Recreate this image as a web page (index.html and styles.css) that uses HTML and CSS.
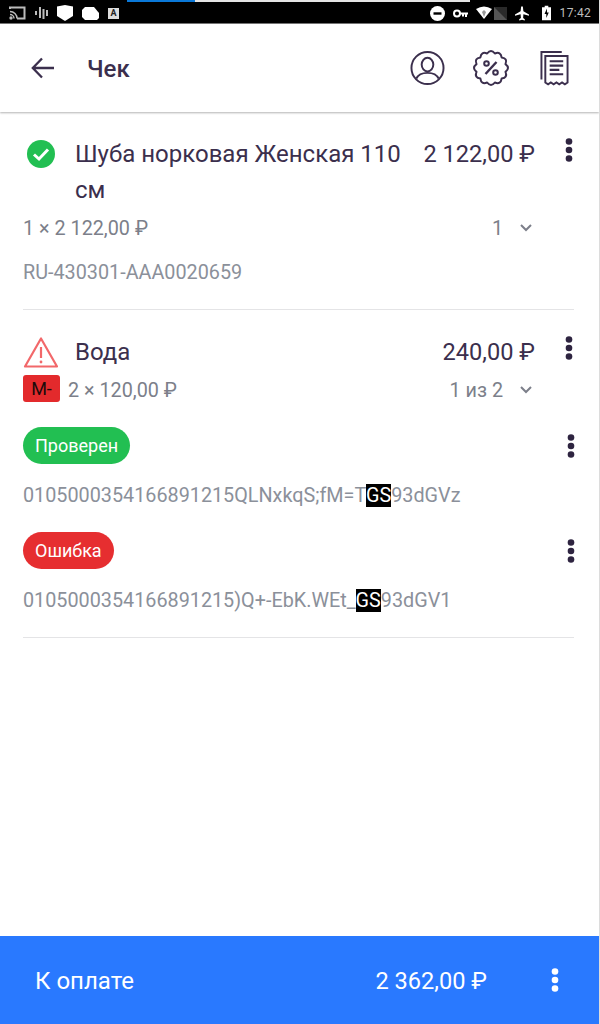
FILE: index.html
```html
<!DOCTYPE html>
<html lang="ru">
<head>
<meta charset="utf-8">
<title>Чек</title>
<link rel="stylesheet" href="styles.css">
</head>
<body>
<div class="screen">
  <div class="status">
    <div class="progress"><span class="progress-blue"></span><span class="progress-light"></span></div>
    <div class="status-left">
      <svg class="sicon" width="17" height="14" viewBox="0 0 17 14"><path d="M1 3V1.500h14.500v11H8" fill="none" stroke="#bbb" stroke-width="2"/><path d="M1 5.500a7 7 0 0 1 7 7M1 8.500a4 4 0 0 1 4 4" fill="none" stroke="#bbb" stroke-width="1.500"/><circle cx="2" cy="12" r="1.700" fill="#bbb"/></svg>
      <svg class="sicon" width="13" height="12" viewBox="0 0 13 12"><path d="M1 4v4M5 0v11M8.500 2v10M12 3v6" stroke="#bbb" stroke-width="2"/></svg>
      <svg class="sicon" width="16" height="16" viewBox="0 0 16 16"><path d="M0 1.500 8 0l8 1.500V11l-8 5-8-5Z" fill="#fff"/></svg>
      <svg class="sicon" width="17" height="13" viewBox="0 0 17 13"><path d="M3 0h9l5 6v5l-2 2H3L0 10V3Z" fill="#fff"/></svg>
      <span class="a-box">A</span>
    </div>
    <div class="status-right">
      <svg width="15" height="15" viewBox="0 0 15 15"><circle cx="7.500" cy="7.500" r="7.500" fill="#fff"/><rect x="3.500" y="6.300" width="8" height="2.400" fill="#000"/></svg>
      <svg width="15" height="9" viewBox="0 0 15 9"><circle cx="4" cy="4.500" r="3" fill="none" stroke="#fff" stroke-width="2"/><path d="M7 3.500h8v2h-1v2.500h-2V5.500h-1v2H9v-2H7Z" fill="#fff"/></svg>
      <svg width="31" height="14" viewBox="0 0 31 14"><path d="M0 3Q8-2 16 3L8 13Z" fill="#fff"/><path d="M8 4l2 2-2 5-2-5Z" fill="#999"/><path d="M18 1h13v13H18Z" fill="#2a2a2a"/><path d="M18 1l13 13H18Z" fill="#555"/></svg>
      <svg width="14" height="15" viewBox="0 0 15 15"><path d="M6.600 0h1.800l.6 5.200 6 3.300v1.500L9 8.300l-.3 4 1.800 1.300V15l-3-.8-3 .8v-1.400l1.800-1.300L6 8.300 0 10V8.500l6-3.300Z" fill="#fff"/></svg>
      <svg class="battery" width="9" height="16" viewBox="0 0 10 16"><path d="M3 0h4v1.500h3V16H0V1.500h3Z" fill="#fff"/><path d="M5.500 3 2.800 9h2v4.500L7.500 7.500h-2Z" fill="#000"/></svg>
      <span class="clock">17:42</span>
    </div>
  </div>

  <header class="appbar">
    <svg class="back" width="24" height="24" viewBox="0 0 24 24"><path d="M23 12H2M11 2.500 1.800 12l9.200 9.500" fill="none" stroke="#3b2f4d" stroke-width="2.300"/></svg>
    <h1 class="title">Чек</h1>
    <div class="actions">
      <svg width="35" height="36" viewBox="0 0 36 36"><g fill="none" stroke="#3b2f4d" stroke-width="2"><circle cx="18" cy="18" r="16.500"/><ellipse cx="18" cy="14.500" rx="6" ry="7"/><path d="M6.500 29c2-4.500 6-6 11.500-6s9.500 1.500 11.500 6"/></g></svg>
      <svg class="badge" width="36" height="36" viewBox="0 0 36 36"><path d="M21.880 3.510Q27.750 1.110 28.610 7.390 34.890 8.250 32.490 14.120 37.500 18 32.490 21.880 34.890 27.750 28.610 28.610 27.750 34.890 21.880 32.490 18 37.500 14.120 32.490 8.250 34.890 7.390 28.610 1.110 27.750 3.510 21.880-1.500 18 3.510 14.120 1.110 8.250 7.390 7.390 8.250 1.110 14.120 3.510 18-1.500 21.880 3.510Z" fill="none" stroke="#3b2f4d" stroke-width="2" stroke-linejoin="round"/><path d="M12.500 24 23.500 12" stroke="#3b2f4d" stroke-width="2.400"/><circle cx="13.500" cy="13.500" r="2.300" fill="none" stroke="#3b2f4d" stroke-width="2"/><circle cx="22.500" cy="22.500" r="2.300" fill="none" stroke="#3b2f4d" stroke-width="2"/></svg>
      <svg width="29" height="36" viewBox="0 0 30 36"><g fill="none" stroke="#3b2f4d" stroke-width="2"><path d="M1.500 30V1.500h21"/><path d="M5.500 33V5.500h23V33l-2.800 1.800-2.900-1.800-2.900 1.800-2.900-1.800-2.900 1.800-2.900-1.800-2.800 1.800Z"/><path d="M10 11h14M10 15.500h14M10 20h10M10 24.500h14" stroke-width="2.200"/></g></svg>
    </div>
  </header>

  <main class="list">
    <section class="item item-first">
      <div class="row-main">
        <svg class="status-icon check" width="30" height="30" viewBox="0 0 30 30"><circle cx="15" cy="15" r="14" fill="#22bf52"/><path d="M8 15.500l5 4.500 9-9.500" fill="none" stroke="#fff" stroke-width="3"/></svg>
        <div class="name">Шуба норковая Женская 110 см</div>
        <div class="price">2 122,00 ₽</div>
        <svg class="dots" width="8" height="24" viewBox="0 0 8 24"><circle cx="4" cy="3.500" r="3.300"/><circle cx="4" cy="12" r="3.300"/><circle cx="4" cy="20.500" r="3.300"/></svg>
      </div>
      <div class="row-sub row-sub-first">
        <span class="sub">1 × 2 122,00 ₽</span>
        <span class="qty">1<svg class="chev" width="12" height="8" viewBox="0 0 12 8"><path d="M1 1l5 5 5-5" fill="none" stroke="#7c7f8a" stroke-width="2"/></svg></span>
      </div>
      <div class="code code-first">RU-430301-AAA0020659</div>
    </section>

    <section class="item item-second">
      <div class="row-main">
        <svg class="status-icon warn" width="36" height="32" viewBox="0 0 36 32"><path d="M18 2.500 2 30.500h32Z" fill="none" stroke="#f2686a" stroke-width="2.200" stroke-linejoin="round"/><path d="M18 11v11" stroke="#f2686a" stroke-width="2.200"/><circle cx="18" cy="26" r="1.400" fill="#f2686a"/></svg>
        <div class="name">Вода</div>
        <div class="price">240,00 ₽</div>
        <svg class="dots" width="8" height="24" viewBox="0 0 8 24"><circle cx="4" cy="3.500" r="3.300"/><circle cx="4" cy="12" r="3.300"/><circle cx="4" cy="20.500" r="3.300"/></svg>
      </div>
      <div class="row-sub row-sub-second">
        <span class="m-tag">М-</span>
        <span class="sub">2 × 120,00 ₽</span>
        <span class="qty">1 из 2<svg class="chev" width="12" height="8" viewBox="0 0 12 8"><path d="M1 1l5 5 5-5" fill="none" stroke="#7c7f8a" stroke-width="2"/></svg></span>
      </div>

      <div class="mark mark-first">
        <div class="mark-head">
          <span class="pill pill-ok">Проверен</span>
          <svg class="dots" width="8" height="24" viewBox="0 0 8 24"><circle cx="4" cy="3.500" r="3.300"/><circle cx="4" cy="12" r="3.300"/><circle cx="4" cy="20.500" r="3.300"/></svg>
        </div>
        <div class="code">0105000354166891215QLNxkqS;fM=T<span class="gs">GS</span>93dGVz</div>
      </div>
      <div class="mark mark-second">
        <div class="mark-head">
          <span class="pill pill-err">Ошибка</span>
          <svg class="dots" width="8" height="24" viewBox="0 0 8 24"><circle cx="4" cy="3.500" r="3.300"/><circle cx="4" cy="12" r="3.300"/><circle cx="4" cy="20.500" r="3.300"/></svg>
        </div>
        <div class="code">0105000354166891215)Q+-EbK.WEt_<span class="gs">GS</span>93dGV1</div>
      </div>
    </section>
  </main>

  <footer class="paybar">
    <span class="pay-label">К оплате</span>
    <span class="pay-sum">2 362,00 ₽</span>
    <svg class="dots dots-white" width="8" height="24" viewBox="0 0 8 24"><circle cx="4" cy="3.500" r="3.300"/><circle cx="4" cy="12" r="3.300"/><circle cx="4" cy="20.500" r="3.300"/></svg>
  </footer>
</div>
</body>
</html>
```

FILE: styles.css
```css
* { box-sizing: border-box; }
html, body { margin: 0; padding: 0; }
body { font-family: Roboto, "Liberation Sans", sans-serif; background: #fff; }
.screen { width: 600px; height: 1024px; display: flex; flex-direction: column; border-right: 1px solid #dcdcdc; overflow: hidden; position: relative; }

.status { height: 24px; background: #000; display: flex; align-items: center; justify-content: space-between; padding: 3px 9px 0; position: relative; flex: none; margin-right: -1px; border-bottom: 1px solid #777; }
.progress { position: absolute; top: 0; left: 127px; display: flex; height: 2px; }
.progress-blue { width: 68px; background: #0a78d8; }
.progress-light { width: 275px; background: #e4e4e4; }
.status-left { display: flex; align-items: center; gap: 9px; }
.status-right { display: flex; align-items: center; gap: 8px; }
.sicon { display: block; }
.a-box { width: 11px; height: 11px; background: #ddd; color: #222; font-size: 9px; font-weight: 700; line-height: 11px; text-align: center; }
.battery { margin-left: 5px; }
.clock { color: #bdbdbd; font-size: 12px; margin-left: 1px; letter-spacing: .3px; }

.appbar { height: 88px; display: flex; align-items: center; padding: 0 0 0 31px; flex: none; box-shadow: 0 1px 2px rgba(0,0,0,.3); position: relative; background: #fff; }
.back { display: block; }
.title { margin: 2px 0 0 32px; font-size: 24px; font-weight: 500; color: #3b2f4d; }
.actions { margin-left: auto; margin-right: 30px; display: flex; align-items: center; gap: 28px; }
.actions svg { display: block; }
.badge { margin-right: 3px; }

.list { flex: 1; padding: 0 25px 0 23px; }
.item { border-bottom: 1px solid #e4e4e6; }
.item-first { height: 198px; padding-top: 24px; }
.item-second { height: 328px; padding-top: 24px; }

.row-main { display: flex; align-items: flex-start; position: relative; }
.status-icon { flex: none; display: block; }
.check { margin: 3px 19px 0 3px; }
.warn { margin: 2px 16px 0 0; }
.name { flex: 1; font-size: 24px; line-height: 36px; color: #3b2f4d; }
.price { font-size: 23.600px; line-height: 36px; color: #3b2f4d; margin-left: 10px; white-space: nowrap; }
.dots { display: block; fill: #2e2440; flex: none; margin: 2px 1px 0 30px; }

.row-sub { display: flex; align-items: center; color: #7c7f8a; font-size: 19.800px; height: 28px; }
.row-sub-first { margin-top: 6px; }
.row-sub-second { margin-top: 6px; }
.sub { color: #7c7f8a; }
.qty { margin-left: auto; margin-right: 42px; color: #7c7f8a; display: flex; align-items: center; gap: 17px; }
.chev { display: block; }
.m-tag { width: 37px; height: 27px; background: #e32a2c; border-radius: 3px; color: #1b0a0a; font-size: 18px; display: flex; align-items: center; justify-content: center; margin: -3px 8px 0 0; }

.code { font-size: 19.800px; color: #8b909a; line-height: 30px; white-space: nowrap; }
.code-first { margin-top: 16px; }
.gs { background: #000; color: #fff; }

.mark-first { margin-top: 23px; }
.mark-second { margin-top: 21px; }
.mark-head { display: flex; justify-content: space-between; align-items: center; height: 37px; }
.mark-head .dots { margin: 0 -1px 0 0; }
.mark .code { margin-top: 17px; }
.pill { height: 37px; border-radius: 18.500px; padding: 0 12px; font-size: 18px; line-height: 37px; color: #fff; }
.pill-ok { background: #22bf52; }
.pill-err { background: #e62e30; }

.paybar { height: 88px; flex: none; background: #2979ff; color: #fff; display: flex; align-items: center; padding: 2px 41px 0 35px; font-size: 24px; margin-right: -1px; }
.pay-sum { margin-left: auto; font-size: 23.600px; }
.dots-white { fill: #fff; margin: -2px 0 0 64px; }
```
